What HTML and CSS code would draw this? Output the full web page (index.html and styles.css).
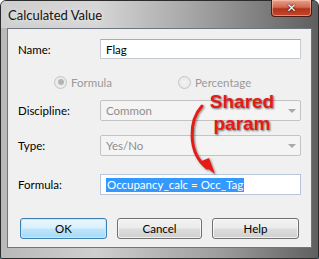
FILE: index.html
```html
<!DOCTYPE html>
<html>
<head>
<meta charset="utf-8">
<link rel="stylesheet" href="styles.css">
</head>
<body>
<div class="window">
  <div class="titlebar">
    <span class="title">Calculated Value</span>
    <div class="close"><span class="x">✕</span></div>
  </div>
  <div class="client">
    <div class="row row-name">
      <span class="label">Name:</span>
      <div class="field input">Flag</div>
    </div>
    <div class="row row-radio">
      <span class="radio checked"><span class="dot"></span><span class="rtext">Formula</span></span>
      <span class="radio"><span class="dot"></span><span class="rtext">Percentage</span></span>
    </div>
    <div class="row row-disc">
      <span class="label">Discipline:</span>
      <div class="field combo"><span>Common</span><span class="arrow"></span></div>
    </div>
    <div class="row row-type">
      <span class="label">Type:</span>
      <div class="field combo"><span>Yes/No</span><span class="arrow"></span></div>
    </div>
    <div class="row row-formula">
      <span class="label">Formula:</span>
      <div class="field input formula"><span class="sel">Occupancy_calc = Occ_Tag</span></div>
    </div>
    <div class="row buttons">
      <button class="btn default">OK</button>
      <button class="btn">Cancel</button>
      <button class="btn">Help</button>
    </div>
  </div>
  <div class="note">Shared<br>param</div>
  <svg class="arrowsvg" width="40" height="80" viewBox="0 0 40 80">
    <defs>
      <filter id="sh" x="-50%" y="-50%" width="200%" height="200%">
        <feDropShadow dx="1" dy="1" stdDeviation="1" flood-color="#000" flood-opacity="0.5"/>
      </filter>
    </defs>
    <g filter="url(#sh)">
      <path d="M17 4 C 4 18, 2 50, 22 66" fill="none" stroke="#e41b17" stroke-width="3" stroke-linecap="round"/>
      <path d="M14 60 L30 72 L24 56 Z" fill="#e41b17"/>
    </g>
  </svg>
</div>
</body>
</html>
```
FILE: styles.css
```css
html, body {
  margin: 0;
  padding: 0;
  background: #ffffff;
}
body {
  font-family: "Segoe UI", Lato, "Liberation Sans", sans-serif;
  font-size: 11.5px;
  color: #000;
}
.window {
  position: relative;
  height: 253px;
  border: 1px solid #2b2b2b;
  border-radius: 6px 6px 2px 2px;
  background: linear-gradient(to right, #b9b9b9 0%, #cfcfcf 30%, #9c9c9c 70%, #5f5f5f 100%);
  padding: 0 6px 4px 6px;
  box-sizing: content-box;
  width: 305px;
  box-shadow: 0 2px 0 #1f4d55, 0 4px 2px rgba(0,0,0,0.3);
}
.titlebar {
  height: 27px;
  display: flex;
  justify-content: space-between;
  align-items: flex-start;
  background: linear-gradient(to right, #cfcfcf 0%, #d6d6d6 30%, #a6a6a6 60%, #707070 90%, #5e5e5e 100%);
  margin: 0 -6px;
  padding: 0 6px 0 7px;
  border-radius: 5px 5px 0 0;
}
.title {
  margin-top: 6px;
  font-size: 13px;
  color: #111;
  text-shadow: 0 0 6px rgba(255,255,255,0.9);
}
.close {
  width: 41px;
  height: 17px;
  margin-top: -1px;
  box-sizing: border-box;
  border: 1px solid #4a1b12;
  border-top: none;
  border-radius: 0 0 4px 4px;
  background: linear-gradient(to bottom, #e9a18c 0%, #d06a4f 45%, #b3331b 55%, #c4482c 100%);
  display: flex;
  align-items: center;
  justify-content: center;
  box-shadow: inset 0 0 0 1px rgba(255,210,190,0.5);
}
.x {
  color: #fff;
  font-family: "DejaVu Sans", sans-serif;
  font-size: 12px;
  font-weight: bold;
  line-height: 1;
  text-shadow: 0 0 2px #400, 0 0 1px #400;
}
.client {
  height: 218px;
  background: #f0f0f0;
  border: 1px solid #6d7680;
  padding: 0 9px 0 10px;
  display: flex;
  flex-direction: column;
}
.row {
  display: flex;
  align-items: center;
}
.label {
  width: 82px;
  flex: none;
}
.field {
  box-sizing: border-box;
  width: 201px;
  display: flex;
  align-items: center;
  padding: 0 5px;
}
.input {
  background: #fff;
  border: 1px solid #c7cdd5;
  border-top-color: #abadb3;
}
.row-name { margin-top: 10px; height: 20px; }
.row-name .field { height: 20px; }
.row-radio { margin-top: 15px; height: 16px; padding-left: 36px; }
.radio {
  width: 129px;
  display: flex;
  align-items: center;
  color: #9a9a9a;
}
.radio .dot {
  width: 11px;
  height: 11px;
  border-radius: 50%;
  border: 1px solid #c4c4c4;
  background: radial-gradient(circle, #f4f4f4 0%, #e4e4e4 100%);
  margin-right: 4px;
  position: relative;
  flex: none;
}
.radio.checked .dot::after {
  content: "";
  position: absolute;
  left: 2.5px;
  top: 2.5px;
  width: 6px;
  height: 6px;
  border-radius: 50%;
  background: #b4b4b4;
}
.row-disc { margin-top: 10px; height: 21px; }
.row-type { margin-top: 14px; height: 21px; }
.combo {
  height: 21px;
  border: 1px solid #c3c3c3;
  border-radius: 2px;
  background: #f4f4f4;
  color: #8e8e8e;
  justify-content: space-between;
  padding-right: 4px;
}
.arrow {
  width: 0;
  height: 0;
  border-left: 4px solid transparent;
  border-right: 4px solid transparent;
  border-top: 4px solid #a8a8a8;
}
.row-formula { margin-top: 18px; height: 21px; }
.formula {
  height: 21px;
  border-color: #b8c8da;
}
.sel {
  background: #3399ff;
  color: #fff;
  line-height: 14px;
  padding: 0 1px;
}
.buttons {
  margin-top: 23px;
  height: 21px;
  gap: 10px;
  padding-left: 2px;
}
.btn {
  width: 87px;
  height: 21px;
  font: inherit;
  color: #000;
  border: 1px solid #707070;
  border-radius: 3px;
  background: linear-gradient(to bottom, #f2f2f2 0%, #ebebeb 48%, #dddddd 52%, #cfcfcf 100%);
  box-shadow: inset 0 0 0 1px rgba(255,255,255,0.7);
  padding: 0;
}
.buttons .btn:nth-child(2) { width: 85px; }
.btn.default {
  border-color: #3c7fb1;
  background: linear-gradient(to bottom, #eaf6fd 0%, #d9f0fc 48%, #bee6fd 52%, #a7d9f5 100%);
  box-shadow: inset 0 0 0 1px #c8eaf8;
}
.note {
  position: absolute;
  left: 200px;
  top: 90px;
  width: 82px;
  text-align: center;
  font-family: "Liberation Sans", Arial, sans-serif;
  font-weight: bold;
  font-size: 19px;
  line-height: 22px;
  color: #e41b17;
  text-shadow: 1px 1px 2px rgba(0,0,0,0.55);
}
.arrowsvg {
  position: absolute;
  left: 184px;
  top: 101px;
}
```
